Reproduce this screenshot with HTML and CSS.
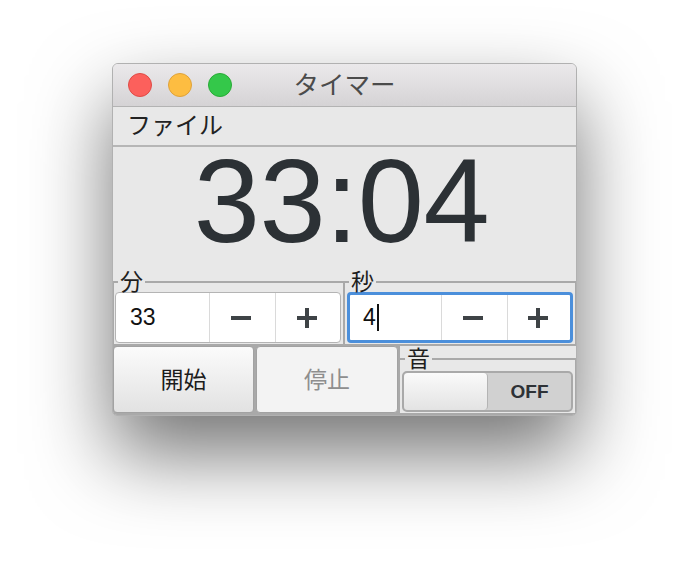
FILE: index.html
```html
<!DOCTYPE html>
<html lang="ja">
<head>
<meta charset="utf-8">
<title>タイマー</title>
<link rel="stylesheet" href="styles.css">
</head>
<body>
<div class="window">
  <div class="titlebar">
    <div class="lights">
      <span class="light red"></span>
      <span class="light yellow"></span>
      <span class="light green"></span>
    </div>
    <div class="title">タイマー</div>
    <div class="spacer"></div>
  </div>
  <div class="menubar"><span class="menu-item">ファイル</span></div>
  <div class="clock">33:04</div>
  <div class="fields">
    <fieldset class="group">
      <legend class="group-label">分</legend>
      <div class="spinner">
        <div class="spin-text">33</div>
        <div class="spin-btn"><svg width="20" height="20" viewBox="0 0 20 20"><rect x="0" y="8" width="20" height="4" fill="#3e4346"/></svg></div>
        <div class="spin-btn"><svg width="20" height="20" viewBox="0 0 20 20"><rect x="0" y="8" width="20" height="4" fill="#3e4346"/><rect x="8" y="0" width="4" height="20" fill="#3e4346"/></svg></div>
      </div>
    </fieldset>
    <fieldset class="group">
      <legend class="group-label">秒</legend>
      <div class="spinner focused">
        <div class="spin-text">4<span class="caret"></span></div>
        <div class="spin-btn"><svg width="20" height="20" viewBox="0 0 20 20"><rect x="0" y="8" width="20" height="4" fill="#3e4346"/></svg></div>
        <div class="spin-btn"><svg width="20" height="20" viewBox="0 0 20 20"><rect x="0" y="8" width="20" height="4" fill="#3e4346"/><rect x="8" y="0" width="4" height="20" fill="#3e4346"/></svg></div>
      </div>
    </fieldset>
  </div>
  <div class="controls">
    <button class="btn">開始</button>
    <button class="btn disabled">停止</button>
    <div class="sound-cell">
      <fieldset class="group sound">
        <legend class="group-label sound-label">音</legend>
        <div class="toggle">
          <span class="thumb"></span>
          <span class="toggle-text">OFF</span>
        </div>
      </fieldset>
    </div>
  </div>
</div>
</body>
</html>
```

FILE: styles.css
```css
* { box-sizing: border-box; }

html, body {
  margin: 0;
  padding: 0;
  background: #ffffff;
  height: 576px;
  overflow: hidden;
  font-family: "Liberation Sans", "Noto Sans CJK JP", sans-serif;
}

.window {
  margin: 63px 0 0 112px;
  width: 465px;
  border: 1px solid #b1b1b1;
  border-radius: 6px 6px 5px 5px;
  background: #e8e8e8;
  overflow: hidden;
  box-shadow: 0 38px 80px rgba(0, 0, 0, 0.55);
}

.titlebar {
  height: 43px;
  display: grid;
  grid-template-columns: 1fr auto 1fr;
  align-items: center;
  background: linear-gradient(#ebe9eb, #d5d3d5);
  border-bottom: 1px solid #b3b3b3;
}

.lights {
  display: flex;
  gap: 16px;
  padding-left: 15px;
}

.light {
  width: 24px;
  height: 24px;
  border-radius: 50%;
  display: block;
}
.light.red { background: #fc605c; border: 1px solid #df4b46; }
.light.yellow { background: #fdbd41; border: 1px solid #dfa23a; }
.light.green { background: #34c84a; border: 1px solid #29ab36; }

.title {
  font-size: 25.5px;
  line-height: 30px;
  color: #4b4b4b;
}

.menubar {
  height: 40px;
  border-bottom: 2px solid #b6b6b6;
  padding-left: 14px;
  display: flex;
  align-items: center;
}

.menu-item {
  font-size: 24px;
  line-height: 30px;
  color: #222222;
}

.clock {
  height: 125px;
  padding-top: 6px;
  padding-right: 6px;
  font-size: 119px;
  line-height: 96px;
  text-align: center;
  color: #2c3135;
  letter-spacing: -0.5px;
}

.fields {
  display: grid;
  grid-template-columns: 231px 1fr;
}

.group {
  margin: 0;
  padding: 0;
  min-width: 0;
  border-style: solid;
  border-color: #a9a9a9;
  border-width: 2px 1px 1px 1px;
}

.group-label {
  margin-left: 4px;
  padding: 0 2px;
  font-size: 23px;
  line-height: 20px;
  color: #1e1e1e;
}

.spinner {
  height: 51px;
  margin: 0 2px 1px 1px;
  display: grid;
  grid-template-columns: 1fr 66px 65px;
  background: #ffffff;
  border: 1px solid #b4b4b4;
  border-radius: 4px;
}

.spinner.focused {
  border: 3px solid #4b8fdb;
  margin-left: 2px;
  grid-template-columns: 1fr 66px 63px;
}

.spin-text {
  display: flex;
  align-items: center;
  padding-left: 14px;
  font-size: 23px;
  color: #111111;
}

.focused .spin-text { padding-left: 13px; }

.caret {
  display: inline-block;
  width: 2px;
  height: 27px;
  margin-left: 1px;
  background: #111111;
}

.spin-btn {
  display: flex;
  align-items: center;
  justify-content: center;
  padding-right: 3px;
  border-left: 1px solid #dadada;
}

.controls {
  height: 70px;
  display: grid;
  grid-template-columns: 141px 142px 1fr;
  column-gap: 2px;
  padding: 1px 0 2px 0;
  background: #a9a9a9;
}

.btn {
  margin: 0;
  border: 1px solid #a2a2a2;
  border-radius: 4px;
  background: linear-gradient(#fbfbfb, #e2e2e2);
  font-family: "Liberation Sans", "Noto Sans CJK JP", sans-serif;
  font-size: 23px;
  line-height: 30px;
  color: #1c1c1c;
  padding: 0;
}

.btn.disabled {
  background: #f3f3f3;
  color: #8e8e8e;
}

.sound-cell {
  background: #e8e8e8;
  padding-top: 3px;
}

.group.sound {
  border-width: 2px 1px 0 0;
  padding-bottom: 1px;
}

.sound-label {
  margin-left: 5px;
}

.toggle {
  height: 41px;
  margin: 2px 2px 0 2px;
  display: grid;
  grid-template-columns: 84px 1fr;
  border: 2px solid #a9a9a9;
  border-radius: 5px;
  background: #d1d1d1;
  overflow: hidden;
}

.thumb {
  background: linear-gradient(#fafafa, #e3e3e3);
  border-right: 1px solid #b4b4b4;
  border-radius: 4px;
}

.toggle-text {
  display: flex;
  align-items: center;
  justify-content: center;
  font-size: 19px;
  font-weight: bold;
  color: #2e3236;
}
```
